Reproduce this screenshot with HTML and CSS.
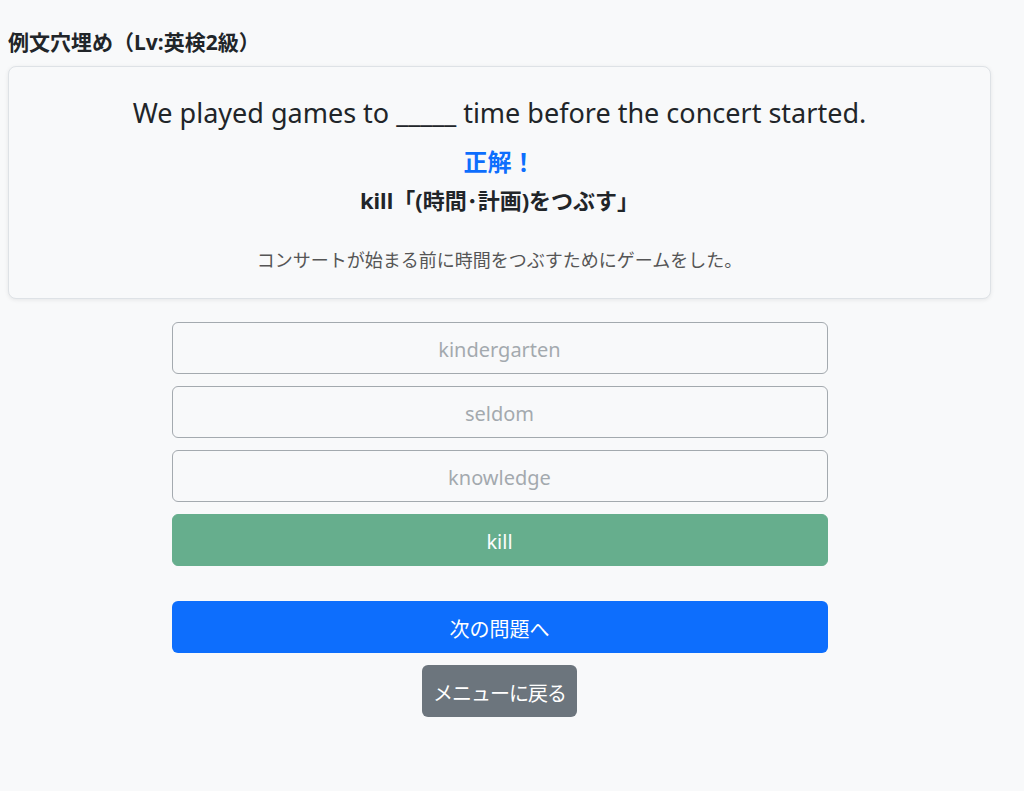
FILE: index.html
```html
<!DOCTYPE html>
<html lang="ja">
<head>
    <meta charset="UTF-8">
    <meta name="viewport" content="width=device-width, initial-scale=1.0">
    <title>例文穴埋め</title>
    <link rel="stylesheet" href="styles.css">
</head>
<body>
    <div class="page">
        <h1 class="quiz-title">例文穴埋め（Lv:英検2級）</h1>
        <div class="card">
            <p class="sentence">We played games to _____ time before the concert started.</p>
            <div class="result">
                <div class="result-label">正解！</div>
                <div class="result-word">kill「(時間･計画)をつぶす」</div>
            </div>
            <p class="translation">コンサートが始まる前に時間をつぶすためにゲームをした。</p>
        </div>
        <div class="choices">
            <button class="choice" disabled>kindergarten</button>
            <button class="choice" disabled>seldom</button>
            <button class="choice" disabled>knowledge</button>
            <button class="choice correct" disabled>kill</button>
        </div>
        <div class="actions">
            <button class="btn-next">次の問題へ</button>
            <button class="btn-menu">メニューに戻る</button>
        </div>
    </div>
</body>
</html>
```

FILE: styles.css
```css
body {
    margin: 0;
    background-color: #f8f9fa;
    color: #212529;
    font-family: "Noto Sans", "Noto Sans CJK JP", sans-serif;
}
.page {
    width: 983px;
    padding: 26px 8px 40px;
}
.quiz-title {
    font-size: 21px;
    font-weight: bold;
    line-height: 33px;
    margin: 0 0 7px;
}
.card {
    background-color: #f8f9fa;
    border: 1px solid #dee2e6;
    border-radius: 8px;
    box-shadow: 0 1px 4px rgba(0,0,0,0.08);
    padding: 28px 16px 24px;
    text-align: center;
}
.sentence {
    font-size: 27px;
    line-height: 36px;
    margin: 0;
}
.result {
    margin-top: 16px;
    font-weight: bold;
    line-height: 30px;
}
.result-label {
    color: #0d6efd;
    font-size: 24px;
    margin-bottom: 8px;
}
.result-word {
    font-size: 22px;
}
.translation {
    margin: 32px 0 0;
    font-size: 18px;
    line-height: 27px;
    color: #555;
}
.choices {
    width: 656px;
    margin: 23px auto 0;
    display: flex;
    flex-direction: column;
    gap: 12px;
}
button {
    font-family: inherit;
    font-size: 20px;
    height: 52px;
    padding: 3px 0 0;
    border-radius: 6px;
    border: 1px solid transparent;
    white-space: nowrap;
    cursor: pointer;
}
.choice {
    width: 100%;
    background-color: transparent;
    border-color: #6c757d;
    color: #6c757d;
    opacity: 0.6;
}
.choice.correct {
    background-color: #198754;
    border-color: #198754;
    color: #fff;
    opacity: 0.65;
}
.actions {
    width: 656px;
    margin: 35px auto 0;
    display: flex;
    flex-direction: column;
    align-items: center;
    gap: 12px;
}
.btn-next {
    width: 100%;
    background-color: #0d6efd;
    color: #fff;
}
.btn-menu {
    width: 155px;
    background-color: #6c757d;
    color: #fff;
    letter-spacing: -1px;
}
```
